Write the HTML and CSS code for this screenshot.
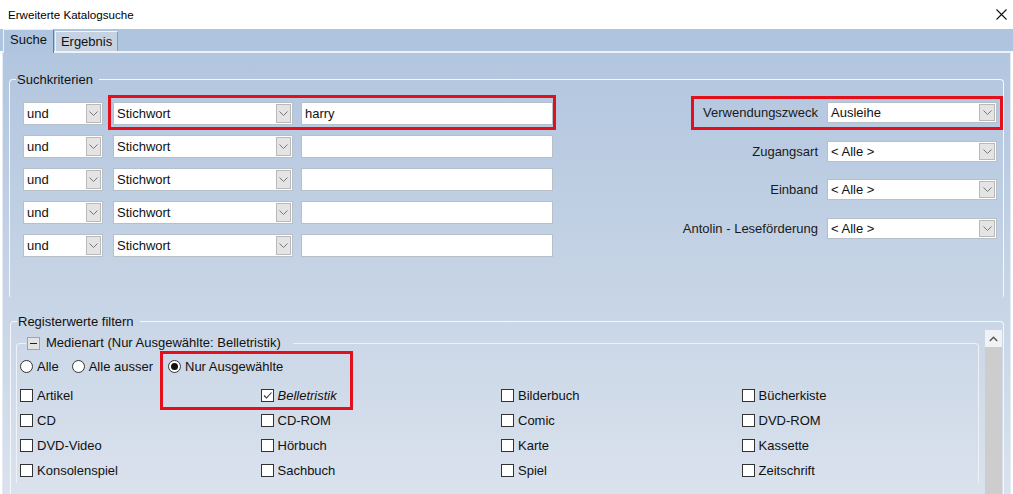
FILE: index.html
```html
<!DOCTYPE html>
<html lang="de">
<head>
<meta charset="utf-8">
<title>Erweiterte Katalogsuche</title>
<link rel="stylesheet" href="styles.css">
</head>
<body>
<div class="window">
  <div class="titlebar">
    <span class="title">Erweiterte Katalogsuche</span>
    <svg class="close" width="11" height="11" viewBox="0 0 11 11"><path d="M0.5 0.5 L10.5 10.5 M10.5 0.5 L0.5 10.5" stroke="#111" stroke-width="1.1" fill="none"/></svg>
  </div>
  <div class="tabstrip">
    <div class="tab active">Suche</div>
    <div class="tab">Ergebnis</div>
  </div>
  <div class="page">
    <fieldset class="group search">
      <legend>Suchkriterien</legend>
      <div class="search-body">
        <div class="crit-rows">
          <div class="crit-row">
            <div class="sel w-op"><span>und</span><i class="btn"><svg width="9" height="5" viewBox="0 0 9 5"><path d="M0.5 0.5 L4.5 4.5 L8.5 0.5" stroke="#777" fill="none"/></svg></i></div>
            <div class="sel w-field"><span>Stichwort</span><i class="btn"><svg width="9" height="5" viewBox="0 0 9 5"><path d="M0.5 0.5 L4.5 4.5 L8.5 0.5" stroke="#777" fill="none"/></svg></i></div>
            <div class="inp">harry</div>
          </div>
          <div class="crit-row">
            <div class="sel w-op"><span>und</span><i class="btn"><svg width="9" height="5" viewBox="0 0 9 5"><path d="M0.5 0.5 L4.5 4.5 L8.5 0.5" stroke="#777" fill="none"/></svg></i></div>
            <div class="sel w-field"><span>Stichwort</span><i class="btn"><svg width="9" height="5" viewBox="0 0 9 5"><path d="M0.5 0.5 L4.5 4.5 L8.5 0.5" stroke="#777" fill="none"/></svg></i></div>
            <div class="inp"></div>
          </div>
          <div class="crit-row">
            <div class="sel w-op"><span>und</span><i class="btn"><svg width="9" height="5" viewBox="0 0 9 5"><path d="M0.5 0.5 L4.5 4.5 L8.5 0.5" stroke="#777" fill="none"/></svg></i></div>
            <div class="sel w-field"><span>Stichwort</span><i class="btn"><svg width="9" height="5" viewBox="0 0 9 5"><path d="M0.5 0.5 L4.5 4.5 L8.5 0.5" stroke="#777" fill="none"/></svg></i></div>
            <div class="inp"></div>
          </div>
          <div class="crit-row">
            <div class="sel w-op"><span>und</span><i class="btn"><svg width="9" height="5" viewBox="0 0 9 5"><path d="M0.5 0.5 L4.5 4.5 L8.5 0.5" stroke="#777" fill="none"/></svg></i></div>
            <div class="sel w-field"><span>Stichwort</span><i class="btn"><svg width="9" height="5" viewBox="0 0 9 5"><path d="M0.5 0.5 L4.5 4.5 L8.5 0.5" stroke="#777" fill="none"/></svg></i></div>
            <div class="inp"></div>
          </div>
          <div class="crit-row">
            <div class="sel w-op"><span>und</span><i class="btn"><svg width="9" height="5" viewBox="0 0 9 5"><path d="M0.5 0.5 L4.5 4.5 L8.5 0.5" stroke="#777" fill="none"/></svg></i></div>
            <div class="sel w-field"><span>Stichwort</span><i class="btn"><svg width="9" height="5" viewBox="0 0 9 5"><path d="M0.5 0.5 L4.5 4.5 L8.5 0.5" stroke="#777" fill="none"/></svg></i></div>
            <div class="inp"></div>
          </div>
        </div>
        <div class="props">
          <label>Verwendungszweck</label>
          <div class="sel sm"><span>Ausleihe</span><i class="btn"><svg width="9" height="5" viewBox="0 0 9 5"><path d="M0.5 0.5 L4.5 4.5 L8.5 0.5" stroke="#777" fill="none"/></svg></i></div>
          <label>Zugangsart</label>
          <div class="sel sm"><span>&lt; Alle &gt;</span><i class="btn"><svg width="9" height="5" viewBox="0 0 9 5"><path d="M0.5 0.5 L4.5 4.5 L8.5 0.5" stroke="#777" fill="none"/></svg></i></div>
          <label>Einband</label>
          <div class="sel sm"><span>&lt; Alle &gt;</span><i class="btn"><svg width="9" height="5" viewBox="0 0 9 5"><path d="M0.5 0.5 L4.5 4.5 L8.5 0.5" stroke="#777" fill="none"/></svg></i></div>
          <label>Antolin - Leseförderung</label>
          <div class="sel sm"><span>&lt; Alle &gt;</span><i class="btn"><svg width="9" height="5" viewBox="0 0 9 5"><path d="M0.5 0.5 L4.5 4.5 L8.5 0.5" stroke="#777" fill="none"/></svg></i></div>
        </div>
      </div>
    </fieldset>

    <fieldset class="group register">
      <legend>Registerwerte filtern</legend>
      <div class="reg-body">
        <div class="reg-content">
          <fieldset class="sub">
            <legend><span class="minus"></span>Medienart (Nur Ausgewählte: Belletristik)</legend>
            <div class="radios">
              <span class="radio"><i class="dot"></i>Alle</span>
              <span class="radio"><i class="dot"></i>Alle ausser</span>
              <span class="radio on"><i class="dot"></i>Nur Ausgewählte</span>
            </div>
            <div class="checks">
              <span class="chk"><i class="box"></i>Artikel</span>
              <span class="chk on"><i class="box"><svg width="11" height="11" viewBox="0 0 11 11"><path d="M2 5.5 L4.5 8 L9.5 2.5" stroke="#333" stroke-width="1.1" fill="none"/></svg></i><em>Belletristik</em></span>
              <span class="chk"><i class="box"></i>Bilderbuch</span>
              <span class="chk"><i class="box"></i>Bücherkiste</span>
              <span class="chk"><i class="box"></i>CD</span>
              <span class="chk"><i class="box"></i>CD-ROM</span>
              <span class="chk"><i class="box"></i>Comic</span>
              <span class="chk"><i class="box"></i>DVD-ROM</span>
              <span class="chk"><i class="box"></i>DVD-Video</span>
              <span class="chk"><i class="box"></i>Hörbuch</span>
              <span class="chk"><i class="box"></i>Karte</span>
              <span class="chk"><i class="box"></i>Kassette</span>
              <span class="chk"><i class="box"></i>Konsolenspiel</span>
              <span class="chk"><i class="box"></i>Sachbuch</span>
              <span class="chk"><i class="box"></i>Spiel</span>
              <span class="chk"><i class="box"></i>Zeitschrift</span>
            </div>
          </fieldset>
        </div>
        <div class="scrollbar">
          <div class="sb-up"><svg width="9" height="6" viewBox="0 0 9 6"><path d="M0.8 5 L4.5 1.2 L8.2 5" stroke="#555" stroke-width="1.4" fill="none"/></svg></div>
          <div class="sb-track"></div>
        </div>
      </div>
    </fieldset>
  </div>

  <div class="mark mark-1"></div>
  <div class="mark mark-2"></div>
  <div class="mark mark-3"></div>
</div>
</body>
</html>
```

FILE: styles.css
```css
* { box-sizing: border-box; }
html, body { margin: 0; padding: 0; }
body {
  width: 1013px;
  height: 494px;
  overflow: hidden;
  font-family: "Liberation Sans", Arial, sans-serif;
  font-size: 13px;
  color: #111;
  background: #fff;
}
.window {
  position: relative;
  width: 1013px;
  height: 494px;
  display: flex;
  flex-direction: column;
  overflow: hidden;
}
.titlebar {
  height: 29px;
  flex: none;
  background: #fff;
  display: flex;
  align-items: center;
  justify-content: space-between;
  padding: 0 6px 0 8px;
}
.title { font-size: 11.6px; color: #000; }
.close { margin-top: -1px; }

.tabstrip {
  height: 22px;
  flex: none;
  background: #afc4de;
  display: flex;
  align-items: flex-end;
  padding-left: 3px;
  gap: 1px;
  position: relative;
  z-index: 1;
}
.tab {
  height: 20px;
  padding: 0 5px;
  display: flex;
  align-items: center;
  background: #c6d2e1;
  border: 1px solid #8e9aa8;
  border-bottom: none;
  border-top-color: #f2f5f9;
  border-left-color: #eef2f7;
  font-size: 13px;
}
.tab.active {
  height: 24px;
  margin-bottom: -2px;
  padding: 0 6px 4px;
  background: #afc4de;
  border-color: #eef2f7;
  border-right-color: #6f7b89;
}

.page {
  flex: 1;
  min-height: 0;
  margin: 0 2px;
  border-top: 2px solid #eef2f7;
  border-left: 1px solid #e4ebf3;
  border-right: 1px solid #e4ebf3;
  background: linear-gradient(to bottom, #b2c6df 0%, #c5d3e5 50%, #dae2ed 100%);
  padding-top: 19px;
  display: flex;
  flex-direction: column;
  overflow: hidden;
}

.group {
  margin: 0;
  padding: 0;
  border: 1px solid #f4f7fb;
  border-radius: 4px;
  min-width: 0;
}
.group > legend {
  padding: 0 6px 0 1px;
  margin-left: 6px;
  line-height: 15px;
  font-size: 13px;
}
.search {
  margin: 0 6px 0 6px;
  height: 226px;
  flex: none;
  border-bottom-color: transparent;
}
.search-body {
  display: flex;
  justify-content: space-between;
  padding: 15px 6px 0 13px;
}
.crit-rows { display: flex; flex-direction: column; gap: 10px; }
.crit-row { display: flex; align-items: center; }

.sel {
  height: 23px;
  background: #fff;
  border: 1px solid #b7bfc8;
  display: flex;
  align-items: center;
  justify-content: space-between;
  padding: 1px 1px 1px 3px;
}
.sel span { white-space: nowrap; }
.btn {
  width: 15px;
  height: 19px;
  background: #e4e4e4;
  border: 1px solid #b9b9b9;
  display: flex;
  align-items: center;
  justify-content: center;
}
.w-op { width: 80px; margin-right: 10px; }
.w-field { width: 180px; margin-right: 8px; }
.inp {
  width: 252px;
  height: 23px;
  background: #fff;
  border: 1px solid #b7bfc8;
  padding: 0 3px;
  display: flex;
  align-items: center;
}

.props {
  display: grid;
  grid-template-columns: auto 170px;
  column-gap: 9px;
  row-gap: 17.6px;
  align-items: center;
  align-content: start;
}
.props label { text-align: right; color: #1a1a1a; white-space: nowrap; }
.sel.sm { height: 21px; padding: 1px 1px 1px 3px; }
.sel.sm .btn { height: 17px; width: 16px; }

.register {
  margin: 16px 6px 0 7px;
  flex: 1;
  min-height: 0;
  border-bottom: none;
  border-bottom-left-radius: 0;
  border-bottom-right-radius: 0;
}
.reg-body {
  display: flex;
  height: 100%;
  padding: 1px 1px 0 5px;
}
.reg-content { flex: 1; padding-right: 6px; overflow: hidden; }
.sub {
  margin: 6px 0 0 0;
  padding: 0 0 0 4px;
  border: 1px solid #eef2f7;
  border-bottom: none;
  border-radius: 4px 4px 0 0;
  min-width: 0;
}
.sub > legend {
  margin-left: 5px;
  padding: 0 12px 0 1px;
  line-height: 14px;
  display: flex;
  align-items: center;
  font-size: 13px;
}
.minus {
  width: 13px;
  height: 13px;
  background: #e3e3e3;
  border: 1px solid #a3a3a3;
  margin-right: 6px;
  position: relative;
  display: inline-block;
}
.minus::after {
  content: "";
  position: absolute;
  left: 2px;
  right: 2px;
  top: 5px;
  height: 1px;
  background: #222;
}
.radios {
  display: flex;
  align-items: center;
  height: 18px;
  margin-top: 7px;
  margin-left: -1px;
}
.radio { display: flex; align-items: center; margin-right: 11px; }
.radio:first-child { margin-right: 13px; }
.radio .dot {
  width: 13px;
  height: 13px;
  border: 1px solid #333;
  border-radius: 50%;
  background: #fff;
  margin-right: 4px;
  display: flex;
  align-items: center;
  justify-content: center;
}
.radio:nth-child(3) { margin-left: 4px; }
.radio.on .dot::after {
  content: "";
  width: 7px;
  height: 7px;
  border-radius: 50%;
  background: #111;
}
.checks {
  display: grid;
  grid-template-columns: repeat(4, 240.5px);
  grid-auto-rows: 25px;
  margin-top: 8px;
  margin-left: -1px;
}
.chk { display: flex; align-items: center; }
.chk .box {
  width: 13px;
  height: 13px;
  border: 1px solid #333;
  background: #fff;
  margin-right: 4px;
  display: flex;
  align-items: center;
  justify-content: center;
  flex: none;
}
.chk em { font-style: italic; }

.scrollbar {
  width: 17px;
  display: flex;
  flex-direction: column;
  flex: none;
}
.sb-up {
  height: 17px;
  background: #f0f2f5;
  display: flex;
  align-items: center;
  justify-content: center;
}
.sb-track { flex: 1; background: #cdcdcd; }

.mark {
  position: absolute;
  border: 3px solid #e3101c;
  pointer-events: none;
}
.mark-1 { left: 108px; top: 95px; width: 448px; height: 35px; }
.mark-2 { left: 691px; top: 96px; width: 312px; height: 34px; }
.mark-3 { left: 160px; top: 351px; width: 193px; height: 59px; }
```
